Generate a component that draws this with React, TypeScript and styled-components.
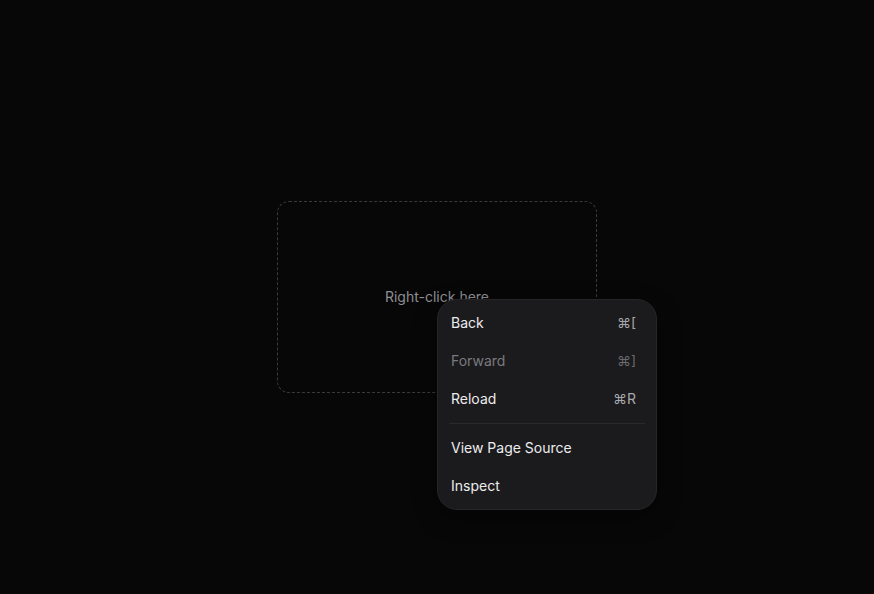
import React from 'react';
import styled, { createGlobalStyle } from 'styled-components';

const GlobalStyle = createGlobalStyle`
  html, body {
    margin: 0;
    padding: 0;
    background: #070707;
  }
  body {
    font-family: Inter, "Noto Sans", sans-serif;
    -webkit-font-smoothing: antialiased;
  }
`;

const Page = styled.div`
  position: relative;
  display: flex;
  align-items: center;
  justify-content: center;
  width: 100vw;
  height: 100vh;
  overflow: hidden;
`;

const Target = styled.div`
  display: flex;
  align-items: center;
  justify-content: center;
  box-sizing: border-box;
  width: 320px;
  height: 192px;
  padding-bottom: 1px;
  border: 1px dashed #3a3a3c;
  border-radius: 12px;
  color: #8e8e93;
  font-size: 14px;
`;

const Menu = styled.div`
  position: absolute;
  top: 299px;
  left: 437px;
  box-sizing: border-box;
  width: 220px;
  padding: 4px;
  background: #1b1b1d;
  border: 1px solid #262628;
  border-radius: 20px;
  box-shadow: 0 8px 24px rgb(0 0 0 / 0.4);
`;

const Item = styled.div<{ $disabled?: boolean }>`
  display: flex;
  align-items: center;
  justify-content: space-between;
  box-sizing: border-box;
  height: 38px;
  padding: 0 16px 2px 9px;
  color: ${(p) => (p.$disabled ? '#7a7a7e' : '#ececee')};
  font-size: 14px;
  border-radius: 10px;
`;

const Shortcut = styled.span<{ $disabled?: boolean }>`
  color: ${(p) => (p.$disabled ? '#6a6a6e' : '#a8a8ac')};
  font-size: 14px;
`;

const Separator = styled.div`
  height: 1px;
  margin: 5px 7px;
  background: #2a2a2c;
`;

const items = [
  { label: 'Back', shortcut: '⌘[' },
  { label: 'Forward', shortcut: '⌘]', disabled: true },
  { label: 'Reload', shortcut: '⌘R' },
];

export default function App() {
  return (
    <>
      <GlobalStyle />
      <Page>
        <Target>Right-click here</Target>
        <Menu>
          {items.map((item) => (
            <Item key={item.label} $disabled={item.disabled}>
              <span>{item.label}</span>
              <Shortcut $disabled={item.disabled}>{item.shortcut}</Shortcut>
            </Item>
          ))}
          <Separator />
          <Item>View Page Source</Item>
          <Item>Inspect</Item>
        </Menu>
      </Page>
    </>
  );
}
